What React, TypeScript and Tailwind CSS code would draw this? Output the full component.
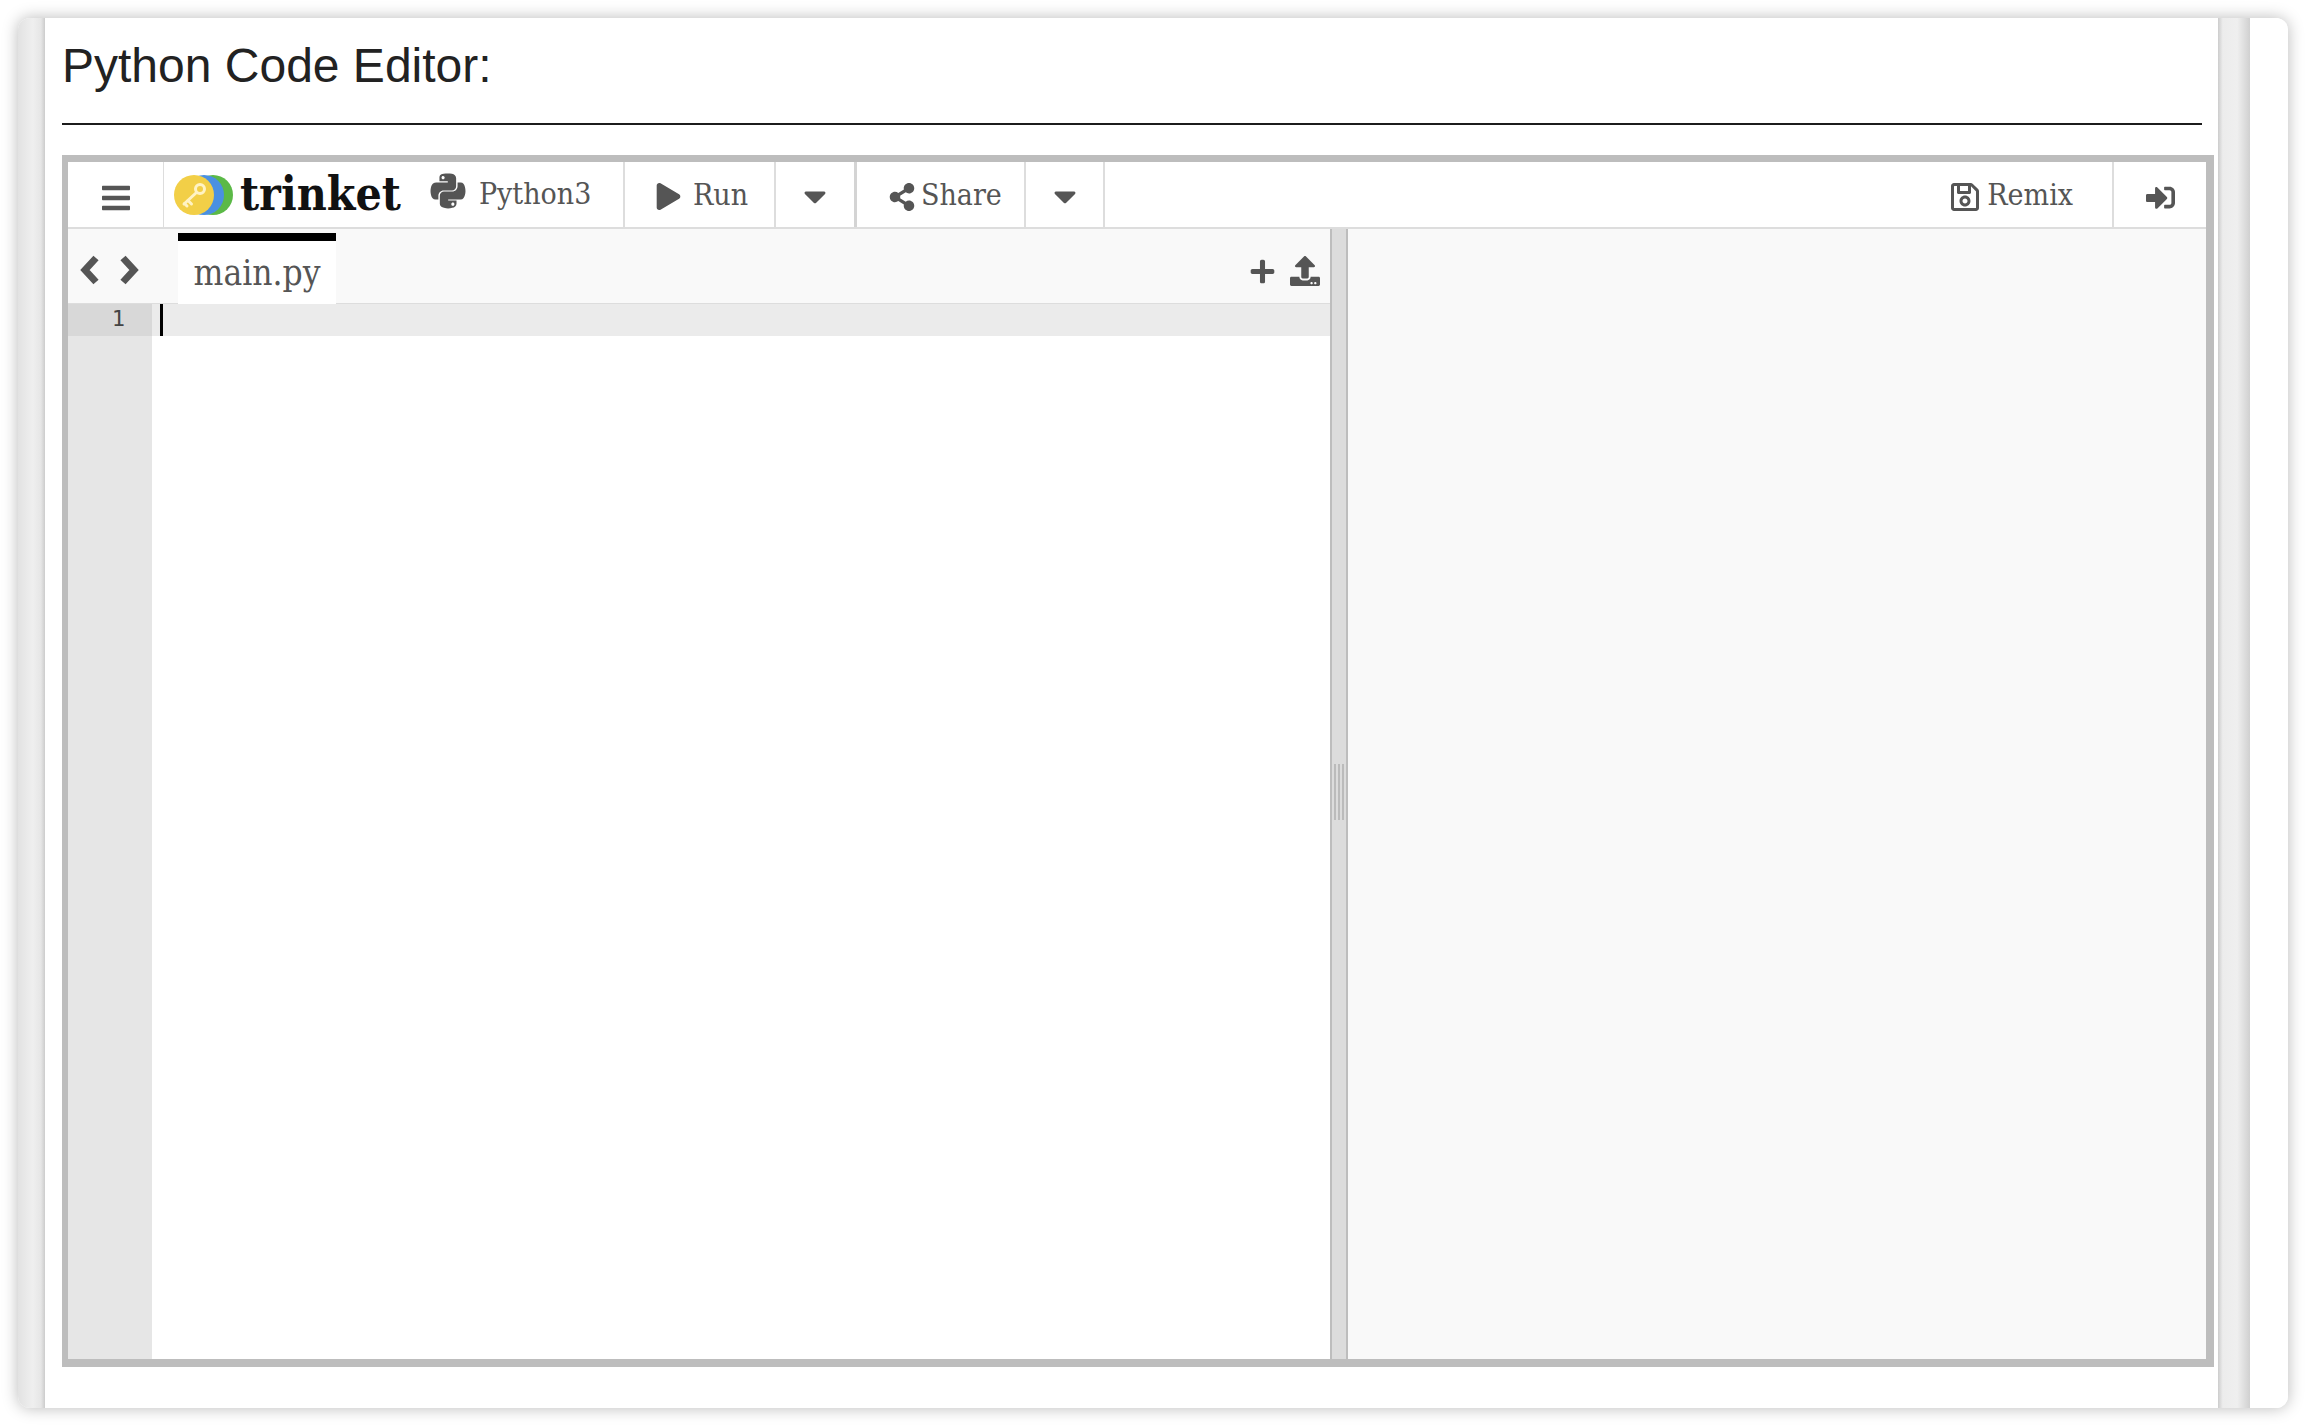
import { FaBars, FaPython, FaPlay, FaCaretDown, FaShareAlt, FaPlus, FaUpload, FaRegSave, FaSignInAlt } from "react-icons/fa";

const serif = "font-['DejaVu_Serif_Condensed','DejaVu_Serif',serif]";

function Logo() {
  return (
    <svg width="60" height="40" viewBox="0 0 60 40" className="shrink-0">
      <circle cx="39" cy="20" r="20" fill="#5bb947" />
      <circle cx="30" cy="20" r="20" fill="#4a90e2" />
      <circle cx="20" cy="20" r="20" fill="#f2cf47" />
      <g stroke="#fff3c4" fill="none" strokeWidth="3" strokeLinecap="round">
        <circle cx="26" cy="14" r="4.5" />
        <path d="M22.5 17.5 L10 29" />
        <path d="M14 25.5 L17.5 29" />
        <path d="M10.5 28.5 L13 31" />
      </g>
    </svg>
  );
}

function Chevron({ d }: { d: string }) {
  return (
    <svg width="22" height="30" viewBox="0 0 22 30" fill="none" stroke="currentColor" strokeWidth="7" strokeLinejoin="miter" className="shrink-0">
      <path d={d} />
    </svg>
  );
}

export default function App() {
  return (
    <div className="h-[1426px] p-[18px] bg-white">
      <div className="h-full flex rounded-xl overflow-hidden bg-white shadow-[0_0_16px_rgba(0,0,0,0.28)]">
        <div className="w-[27px] shrink-0 bg-[linear-gradient(to_right,#e2e2e2,#efefef_55%,#e6e6e6_85%,#cccccc)]" />
        <main className="flex-1 min-w-0 pl-[17px]">
          <h1 className="h-[105px] pt-[16px] text-[48px] leading-[64px] text-[#222] font-['Liberation_Sans',sans-serif] font-normal">
            Python Code Editor:
          </h1>
          <div className="h-[2px] bg-[#1c1c1c] mr-[16px]" />
          <div className="mt-[30px] mr-[4px] h-[1212px] flex flex-col border-solid border-[#bdbdbd] border-l-[6px] border-t-[7px] border-r-[8px] border-b-[8px] bg-white">
            {/* toolbar */}
            <div className={`h-[67px] shrink-0 flex border-b-2 border-[#dddddd] text-[#555] text-[30px] ${serif}`}>
              <div className="w-[96px] shrink-0 flex items-center justify-center border-r border-[#dddddd] pt-[6px]">
                <FaBars className="text-[32px]" />
              </div>
              <div className="w-[461px] shrink-0 flex items-center border-r-2 border-[#dddddd] pl-[10px]">
                <Logo />
                <span className="ml-[6px] text-[46px] leading-none font-bold text-[#111] -mt-[1px]">trinket</span>
                <FaPython className="ml-[27px] text-[40px] -mt-[7px] shrink-0" />
                <span className="ml-[11px] -mt-[2px]">Python3</span>
              </div>
              <div className="w-[151px] shrink-0 flex items-center border-r-2 border-[#dddddd] pl-[30px]">
                <FaPlay className="text-[27px] mt-[4px] shrink-0" />
                <span className="ml-[11px] -mt-[1px]">Run</span>
              </div>
              <div className="w-[81px] shrink-0 flex items-center justify-center border-r-[3px] border-[#d4d4d4] pt-[2px]">
                <FaCaretDown className="text-[36px]" />
              </div>
              <div className="w-[169px] shrink-0 flex items-center border-r-2 border-[#dddddd] pl-[31px]">
                <FaShareAlt className="text-[28px] mt-[4px] shrink-0" />
                <span className="ml-[5px] -mt-[1px]">Share</span>
              </div>
              <div className="w-[79px] shrink-0 flex items-center justify-center border-r-2 border-[#dddddd] pt-[2px]">
                <FaCaretDown className="text-[36px]" />
              </div>
              <div className="flex-1 flex items-center justify-end pr-[39px] border-r-2 border-[#dddddd]">
                <FaRegSave className="text-[32px] mt-[4px] shrink-0" />
                <span className="ml-[6px] -mt-[1px]">Remix</span>
              </div>
              <div className="w-[92px] shrink-0 flex items-center justify-center pt-[6px]">
                <FaSignInAlt className="text-[29px]" />
              </div>
            </div>
            {/* body */}
            <div className="flex-1 min-h-0 flex">
              <div className="w-[1262px] shrink-0 flex flex-col">
                <div className="h-[75px] shrink-0 relative flex items-end bg-[#f9f9f9] border-b border-[#dddddd] text-[#555]">
                  <div className="w-[110px] shrink-0 h-full flex items-center gap-[17px] pl-[11px] pt-[7px]">
                    <Chevron d="M17 3 L6 15 L17 27" />
                    <Chevron d="M5 3 L16 15 L5 27" />
                  </div>
                  <div className={`w-[158px] h-[71px] -mb-px border-t-[8px] border-black bg-white text-center text-[35px] leading-[64px] ${serif}`}>
                    main.py
                  </div>
                  <div className="ml-auto h-full flex items-center gap-[14px] pr-[10px] pt-[10px]">
                    <FaPlus className="text-[27px]" />
                    <FaUpload className="text-[30px]" />
                  </div>
                </div>
                <div className="flex-1 min-h-0 flex">
                  <div className="w-[84px] shrink-0 bg-[#e6e6e6]">
                    <div className="h-[32px] bg-[#d8d8d8] pr-[27px] text-right text-[22px] leading-[30px] text-[#444] font-['DejaVu_Sans_Mono',monospace]">
                      1
                    </div>
                  </div>
                  <div className="flex-1 bg-white">
                    <div className="h-[32px] bg-[#ebebeb] pl-[8px]">
                      <div className="w-[3px] h-full bg-black" />
                    </div>
                  </div>
                </div>
              </div>
              {/* splitter */}
              <div className="w-[18px] shrink-0 flex items-center justify-center bg-[#dcdcdc] border-x-2 border-[#bdbdbd]">
                <div className="h-[56px] w-[10px] flex justify-between mb-[4px]">
                  <div className="w-[2px] bg-[#bbbbbb]" />
                  <div className="w-[2px] bg-[#bbbbbb]" />
                  <div className="w-[2px] bg-[#bbbbbb]" />
                </div>
              </div>
              <div className="flex-1 bg-[#f9f9f9]" />
            </div>
          </div>
        </main>
        <div className="w-[32px] shrink-0 bg-[linear-gradient(to_right,#cccccc,#ececec_15%,#efefef_60%,#d0d0d0)]" />
        <div className="w-[38px] shrink-0 bg-white" />
      </div>
    </div>
  );
}
